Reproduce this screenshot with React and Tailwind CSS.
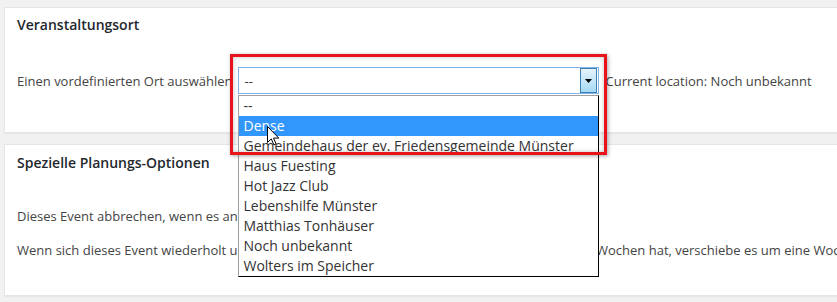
import React from 'react';

const LOCATIONS = [
  '--',
  'Dense',
  'Gemeindehaus der ev. Friedensgemeinde Münster',
  'Haus Fuesting',
  'Hot Jazz Club',
  'Lebenshilfe Münster',
  'Matthias Tonhäuser',
  'Noch unbekannt',
  'Wolters im Speicher',
];

export default function App() {
  return (
    <div className="w-[837px] h-[302px] overflow-hidden bg-[#f1f1f1] pt-[7px] pl-[4px] text-[13px] text-[#444] font-['Open_Sans',sans-serif]">
      {/* Veranstaltungsort */}
      <div className="w-[900px] h-[126px] bg-white border border-[#e5e5e5] shadow-[0_1px_1px_rgba(0,0,0,0.04)] px-[12px] pt-[7px]">
        <h2 className="text-[14px] leading-[20px] font-semibold text-[#23282d]">Veranstaltungsort</h2>
        <div className="mt-[32px] flex items-center whitespace-nowrap">
          <span className="leading-[20px]">Einen vordefinierten Ort auswählen</span>
          <div className="relative ml-[6px]">
            <LocationSelect />
          </div>
          <span className="ml-[6px] leading-[20px]">Current location: Noch unbekannt</span>
        </div>
      </div>

      {/* Spezielle Planungs-Optionen */}
      <div className="mt-[11px] w-[900px] h-[152px] bg-white border border-[#e5e5e5] shadow-[0_1px_1px_rgba(0,0,0,0.04)] px-[12px] pt-[8px]">
        <h2 className="text-[14px] leading-[20px] font-semibold text-[#23282d]">Spezielle Planungs-Optionen</h2>
        <p className="mt-[33px] leading-[20px] whitespace-nowrap">
          Dieses Event abbrechen, wenn es an einem Feiertag stattfindet
        </p>
        <p className="mt-[14px] leading-[20px] whitespace-nowrap">
          Wenn sich dieses Event wiederholt und der jeweils aktuelle Monat des Termins fünf anstatt vier Wochen hat, verschiebe es um eine Woche nach hinten
        </p>
      </div>
    </div>
  );
}

function LocationSelect() {
  return (
    <>
      {/* closed select */}
      <div className="w-[361px] h-[27px] border border-[#7eb4ea] bg-white flex items-center">
        <span className="flex-1 pl-[5px] leading-[20px] text-[#333]">--</span>
        <div className="w-[17px] h-[25px] mr-[1px] border border-[#3c7fb1] bg-gradient-to-b from-[#e5f4fc] to-[#a7d9f5] flex items-center justify-center">
          <svg width="7" height="4" viewBox="0 0 7 4">
            <path d="M0 0h7L3.5 4z" fill="#000" />
          </svg>
        </div>
      </div>

      {/* open list */}
      <ul className="absolute left-0 top-[28px] z-10 w-[361px] h-[182px] bg-white border-t border-t-[#a0a0a0] border-l border-l-[#a0a0a0] border-r border-r-black border-b border-b-black text-[14px] text-[#333]">
        {LOCATIONS.map((loc) => (
          <li
            key={loc}
            className={
              loc === 'Dense'
                ? 'h-[20px] leading-[20px] pl-[4px] bg-[#3297fd] text-white'
                : 'h-[20px] leading-[20px] pl-[4px]'
            }
          >
            {loc}
          </li>
        ))}
      </ul>

      {/* annotation frame */}
      <div className="absolute left-[-8px] top-[-13px] z-20 w-[377px] h-[101px] border-[3px] border-[#e8141c] shadow-[1px_1px_4px_rgba(0,0,0,0.35),inset_0_0_4px_rgba(0,0,0,0.25)] pointer-events-none" />

      {/* mouse pointer */}
      <svg className="absolute left-[29px] top-[59px] z-30" width="13" height="20" viewBox="0 0 13 20">
        <path d="M0.5 0.5v16l3.8-3.6 2.6 6 2.2-1-2.6-5.8h5.3z" fill="#fff" stroke="#000" strokeWidth="1" strokeLinejoin="round" />
      </svg>
    </>
  );
}
